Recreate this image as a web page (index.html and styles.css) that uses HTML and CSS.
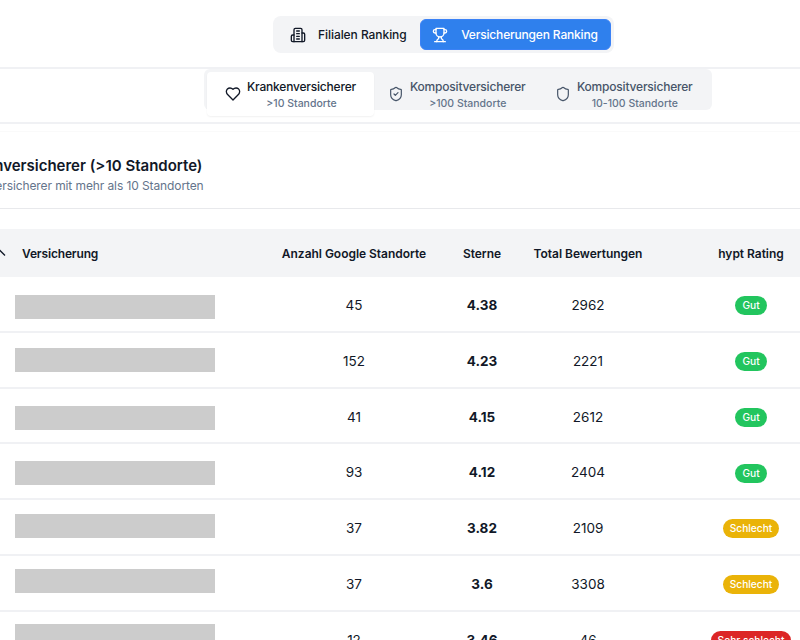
FILE: index.html
```html
<!DOCTYPE html>
<html lang="de">
<head>
<meta charset="utf-8">
<title>Versicherungen Ranking</title>
<link rel="stylesheet" href="styles.css">
</head>
<body>
<div class="page">
  <header class="topbar">
    <nav class="switch">
      <button class="switch-btn">
        <svg class="ico" viewBox="0 0 24 24"><path d="M6 22V4a2 2 0 0 1 2-2h8a2 2 0 0 1 2 2v18Z"/><path d="M6 12H4a2 2 0 0 0-2 2v6a2 2 0 0 0 2 2h2"/><path d="M18 9h2a2 2 0 0 1 2 2v9a2 2 0 0 1-2 2h-2"/><path d="M10 6h4M10 10h4M10 14h4M10 18h4"/></svg>
        <span>Filialen Ranking</span>
      </button>
      <button class="switch-btn is-active">
        <svg class="ico" viewBox="0 0 24 24"><path d="M6 9H4.500a2.500 2.500 0 0 1 0-5H6"/><path d="M18 9h1.500a2.500 2.500 0 0 0 0-5H18"/><path d="M4 22h16"/><path d="M10 14.660V17c0 .55-.47.98-.97 1.210C7.850 18.750 7 20.240 7 22"/><path d="M14 14.660V17c0 .55.47.98.97 1.210C16.150 18.750 17 20.240 17 22"/><path d="M18 2H6v7a6 6 0 0 0 12 0V2Z"/></svg>
        <span>Versicherungen Ranking</span>
      </button>
    </nav>
  </header>
  <section class="tabbar">
    <div class="tabs">
      <div class="tab is-active">
        <svg class="ico" viewBox="0 0 24 24"><path d="M19 14c1.490-1.460 3-3.210 3-5.500A5.500 5.500 0 0 0 16.500 3c-1.760 0-3 .5-4.500 2-1.500-1.500-2.740-2-4.500-2A5.500 5.500 0 0 0 2 8.500c0 2.300 1.500 4.050 3 5.500l7 7Z"/></svg>
        <div class="tab-text"><span class="tab-title">Krankenversicherer</span><span class="tab-sub">&gt;10 Standorte</span></div>
      </div>
      <div class="tab">
        <svg class="ico thin" viewBox="0 0 24 24"><path d="M20 13c0 5-3.500 7.500-7.660 8.950a1 1 0 0 1-.67-.01C7.500 20.500 4 18 4 13V6a1 1 0 0 1 1-1c2 0 4.500-1.200 6.240-2.720a1.170 1.170 0 0 1 1.520 0C14.510 3.810 17 5 19 5a1 1 0 0 1 1 1z"/><path d="m9 12 2 2 4-4"/></svg>
        <div class="tab-text"><span class="tab-title">Kompositversicherer</span><span class="tab-sub">&gt;100 Standorte</span></div>
      </div>
      <div class="tab">
        <svg class="ico thin" viewBox="0 0 24 24"><path d="M20 13c0 5-3.500 7.500-7.660 8.950a1 1 0 0 1-.67-.01C7.500 20.500 4 18 4 13V6a1 1 0 0 1 1-1c2 0 4.500-1.200 6.240-2.720a1.170 1.170 0 0 1 1.520 0C14.510 3.810 17 5 19 5a1 1 0 0 1 1 1z"/></svg>
        <div class="tab-text"><span class="tab-title">Kompositversicherer</span><span class="tab-sub">10-100 Standorte</span></div>
      </div>
    </div>
  </section>
  <section class="card">
    <div class="card-head">
      <h2>Krankenversicherer (&gt;10 Standorte)</h2>
      <p>Krankenversicherer mit mehr als 10 Standorten</p>
    </div>
    <div class="table">
      <div class="row head">
        <div class="name-head">
          <svg class="sort" viewBox="0 0 24 24"><path d="m18 15-6-6-6 6"/></svg>
          <span>Versicherung</span>
        </div>
        <div>Anzahl Google Standorte</div><div>Sterne</div><div>Total Bewertungen</div><div>hypt Rating</div>
      </div>
      <div class="row r1"><div class="mask"></div><div>45</div><div class="stars">4.38</div><div>2962</div><div><span class="pill good">Gut</span></div></div>
      <div class="row r2"><div class="mask"></div><div>152</div><div class="stars">4.23</div><div>2221</div><div><span class="pill good">Gut</span></div></div>
      <div class="row r3"><div class="mask"></div><div>41</div><div class="stars">4.15</div><div>2612</div><div><span class="pill good">Gut</span></div></div>
      <div class="row r4"><div class="mask"></div><div>93</div><div class="stars">4.12</div><div>2404</div><div><span class="pill good">Gut</span></div></div>
      <div class="row r5"><div class="mask"></div><div>37</div><div class="stars">3.82</div><div>2109</div><div><span class="pill bad">Schlecht</span></div></div>
      <div class="row r6"><div class="mask"></div><div>37</div><div class="stars">3.6</div><div>3308</div><div><span class="pill bad">Schlecht</span></div></div>
      <div class="row r7"><div class="mask"></div><div>12</div><div class="stars">3.46</div><div>46</div><div><span class="pill worst">Sehr schlecht</span></div></div>
    </div>
  </section>
</div>
</body>
</html>
```
FILE: styles.css
```css
* { box-sizing: border-box; }
html, body { margin: 0; height: 100%; overflow: hidden; background: #fff; }
body { font-family: Inter, "Liberation Sans", sans-serif; color: #111827; }
.page { width: 800px; height: 640px; overflow: hidden; }
.ico { width: 16px; height: 16px; fill: none; stroke: currentColor; stroke-width: 2; stroke-linecap: round; stroke-linejoin: round; flex: none; }
.ico.thin { stroke-width: 1.800; }

.topbar { height: 69px; padding: 16px 0 0 273px; border-bottom: 2px solid #f0f1f4; }
.switch { display: flex; gap: 4px; height: 37px; padding: 3px; width: 341px; background: #f3f4f6; border-radius: 8px; }
.switch-btn { display: flex; align-items: center; font: 500 12px/16px Inter, "Liberation Sans", sans-serif; letter-spacing: -.06px; color: #111827; background: transparent; border: 0; padding: 1px 0 0 14px; gap: 12px; width: 141px; border-radius: 6px; }
.switch-btn.is-active { background: #2f80ed; color: #fff; width: 192px; padding-left: 11px; gap: 13px; letter-spacing: -.17px; border: 1px solid #3b82f6; }

.tabbar { height: 55px; padding-left: 204px; border-bottom: 2px solid #f0f1f4; }
.tabs { display: flex; width: 508px; height: 41px; background: #f3f4f6; border-radius: 6px; padding-left: 3px; }
.tab { display: flex; align-items: center; gap: 6px; width: 167px; height: 44px; padding: 6px 0 0 14px; color: #475569; }
.tab.is-active { background: #fff; color: #111827; border-radius: 4px; box-shadow: 0 1px 2px rgba(0,0,0,.06); margin-top: 3px; padding: 0 0 0 18px; }
.tab-text { display: flex; flex-direction: column; align-items: center; }
.tab-title { font-size: 12px; font-weight: 500; line-height: 16px; letter-spacing: -.2px; padding-top: 1px; }
.tab-sub { font-size: 10.500px; font-weight: 500; line-height: 14px; margin-top: 2px; color: #64748b; }

.card { margin-top: 7px; border-top: 1px solid #fafafa; }
.card-head { height: 77px; padding-top: 24px; margin-left: -57px; border-bottom: 1px solid #e8e9ec; }
.card-head h2 { margin: 0; font-size: 15px; font-weight: 600; line-height: 20px; }
.card-head p { margin: 1px 0 0; font-size: 12px; line-height: 18px; letter-spacing: -.1px; color: #64748b; }

.table { margin-top: 20px; width: 852px; }
.row { display: grid; grid-template-columns: 270px 168px 88px 124px 202px; align-items: center; height: 55.830px; padding-top: 2px; border-bottom: 2px solid #f0f1f4; text-align: center; font-size: 13.500px; }
.row.head { height: 48px; padding-top: 0; background: #f3f4f6; border-bottom: 0; font-size: 12px; font-weight: 600; letter-spacing: -.03px; }
.name-head { display: flex; align-items: center; gap: 12px; margin-left: -10px; text-align: left; letter-spacing: -.15px; }
.sort { width: 20px; height: 20px; fill: none; stroke: #111827; stroke-width: 1.600; }
.stars { font-weight: 700; }
.mask { width: 200px; height: 24px; margin-left: 15px; background: #cccccc; align-self: start; }
.r1 .mask { margin-top: 16px; }
.r2 .mask { margin-top: 13px; }
.r3 .mask { margin-top: 15px; }
.r4 .mask { margin-top: 14.500px; }
.r5 .mask { margin-top: 12px; }
.r6 .mask { margin-top: 11px; }
.r7 .mask { margin-top: 10px; }
.pill { display: inline-block; margin-top: 1.500px; padding: 0 7px; border-radius: 10px; color: #fff; font-size: 10.200px; font-weight: 500; line-height: 19px; }
.good { background: #22c55e; }
.bad { background: #eab308; }
.worst { background: #dc2626; }
```
